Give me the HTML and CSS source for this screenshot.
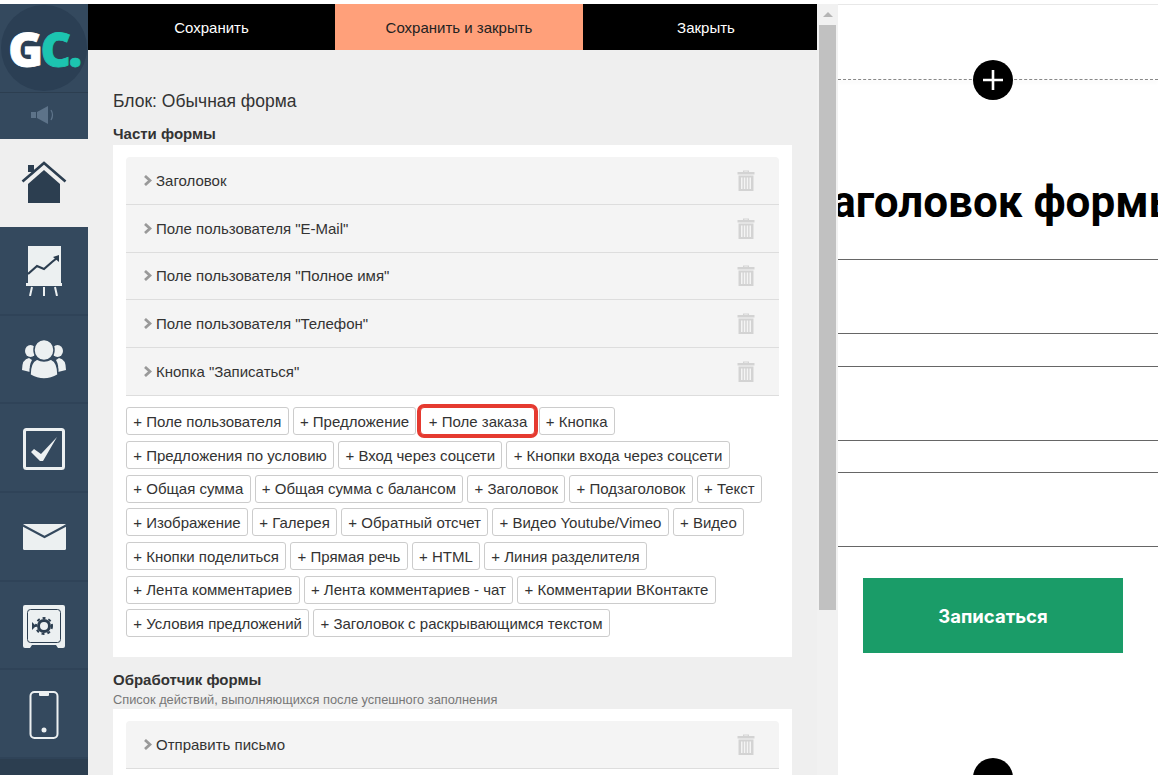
FILE: index.html
```html
<!DOCTYPE html>
<html lang="ru">
<head>
<meta charset="utf-8">
<title>Блок: Обычная форма</title>
<link rel="stylesheet" href="styles.css">
</head>
<body>
<div class="app">
  <nav class="side">
    <div class="logo-wrap"><div class="logo"><span class="g">G</span><span class="c">C.</span></div></div>
    <div class="sound">
      <svg width="28" height="20" viewBox="0 0 28 20"><rect x="1" y="7" width="5" height="6" fill="#5d7389"/><path d="M7 7l11-6v18L7 13z" fill="#5d7389"/><path d="M21 5q3 5 0 10" stroke="#5d7389" stroke-width="1.300" fill="none"/></svg>
    </div>
    <div class="nav-item active">
      <svg width="46" height="44" viewBox="0 0 46 44"><path d="M7 11V4h6v7z" fill="#2c3e50"/><path d="M1.500 20.500L23 2l21.500 18.500" fill="none" stroke="#2c3e50" stroke-width="2.600"/><path d="M7 23L23 9 39 23v19H7z" fill="#2c3e50"/></svg>
    </div>
    <div class="nav-item">
      <svg width="36" height="50" viewBox="0 0 36 50"><rect x="2" y="0" width="33" height="37" fill="#ecf0f1"/><path d="M2 28l9-8 7 3 8-7 5-4" fill="none" stroke="#2c3e50" stroke-width="2.200"/><path d="M33 9v7l-6-5z" fill="#2c3e50"/><rect x="0" y="37" width="36" height="3" fill="#ecf0f1"/><path d="M6 41l-2 9M18 41v9M29 41l2 9" stroke="#ecf0f1" stroke-width="2"/></svg>
    </div>
    <div class="nav-item">
      <svg width="44" height="40" viewBox="0 0 44 40"><ellipse cx="8.500" cy="11" rx="5.500" ry="6" fill="#ecf0f1"/><ellipse cx="35.500" cy="11" rx="5.500" ry="6" fill="#ecf0f1"/><path d="M0 30q0-11 7-12l3 2q-3 5-2 12z" fill="#ecf0f1"/><path d="M44 30q0-11-7-12l-3 2q3 5 2 12z" fill="#ecf0f1"/><ellipse cx="22" cy="10" rx="10" ry="10.500" fill="#ecf0f1" stroke="#34495e" stroke-width="1.500"/><path d="M8 35q0-13 7-16 7 4 14 0 7 3 7 16-14 8-28 0z" fill="#ecf0f1" stroke="#34495e" stroke-width="1.500"/></svg>
    </div>
    <div class="nav-item">
      <svg width="42" height="42" viewBox="0 0 42 42"><rect x="1.500" y="1.500" width="39" height="39" rx="2" fill="none" stroke="#ecf0f1" stroke-width="3"/><path d="M8 24l3-3 7 5 16-17-14 24h-3z" fill="#ecf0f1"/></svg>
    </div>
    <div class="nav-item">
      <svg width="43" height="26" viewBox="0 0 43 26"><rect x="0" y="0" width="43" height="26" rx="1.500" fill="#ecf0f1"/><path d="M0 1.500L21.500 13 43 1.500" fill="none" stroke="#34495e" stroke-width="2"/></svg>
    </div>
    <div class="nav-item">
      <svg width="42" height="43" viewBox="0 0 42 43"><path d="M2 0h38a2 2 0 0 1 2 2v39a2 2 0 0 1-2 2h-5l-2-3H9l-2 3H2a2 2 0 0 1-2-2V2a2 2 0 0 1 2-2z" fill="#ecf0f1"/><rect x="4.500" y="4.500" width="33" height="33" rx="3" fill="none" stroke="#2c3e50" stroke-width="1"/><circle cx="21" cy="21" r="5.500" fill="none" stroke="#2c3e50" stroke-width="3"/><circle cx="21" cy="21" r="8" fill="none" stroke="#2c3e50" stroke-width="2" stroke-dasharray="3 3"/><path d="M9 17l4 4-4 4z" fill="#2c3e50"/></svg>
    </div>
    <div class="nav-item">
      <svg width="30" height="48" viewBox="0 0 30 48"><rect x="1.500" y="1" width="27" height="46" rx="4" fill="none" stroke="#ecf0f1" stroke-width="2"/><path d="M10 1h10v3a1 1 0 0 1-1 1h-8a1 1 0 0 1-1-1z" fill="#ecf0f1"/><circle cx="15" cy="39" r="2.500" fill="#ecf0f1"/></svg>
    </div>
    <div class="side-foot"></div>
  </nav>

  <section class="panel">
    <div class="panel-main">
      <div class="topbar">
        <div class="tb-btn">Сохранить</div>
        <div class="tb-btn primary">Сохранить и закрыть</div>
        <div class="tb-btn">Закрыть</div>
      </div>
      <div class="content">
        <h1 class="block-title">Блок: Обычная форма</h1>
        <h2 class="sec-title">Части формы</h2>
        <div class="card">
          <div class="row"><span class="row-label"><svg class="chev" width="8" height="11" viewBox="0 0 8 11"><path d="M1 1l5 4.500L1 10" fill="none" stroke="#999" stroke-width="2.800"/></svg>Заголовок</span><svg class="trash" width="18" height="21" viewBox="0 0 18 21"><use href="#trash-shape"/></svg></div>
          <div class="row"><span class="row-label"><svg class="chev" width="8" height="11" viewBox="0 0 8 11"><path d="M1 1l5 4.500L1 10" fill="none" stroke="#999" stroke-width="2.800"/></svg>Поле пользователя "E-Mail"</span><svg class="trash" width="18" height="21" viewBox="0 0 18 21"><use href="#trash-shape"/></svg></div>
          <div class="row"><span class="row-label"><svg class="chev" width="8" height="11" viewBox="0 0 8 11"><path d="M1 1l5 4.500L1 10" fill="none" stroke="#999" stroke-width="2.800"/></svg>Поле пользователя "Полное имя"</span><svg class="trash" width="18" height="21" viewBox="0 0 18 21"><use href="#trash-shape"/></svg></div>
          <div class="row"><span class="row-label"><svg class="chev" width="8" height="11" viewBox="0 0 8 11"><path d="M1 1l5 4.500L1 10" fill="none" stroke="#999" stroke-width="2.800"/></svg>Поле пользователя "Телефон"</span><svg class="trash" width="18" height="21" viewBox="0 0 18 21"><use href="#trash-shape"/></svg></div>
          <div class="row"><span class="row-label"><svg class="chev" width="8" height="11" viewBox="0 0 8 11"><path d="M1 1l5 4.500L1 10" fill="none" stroke="#999" stroke-width="2.800"/></svg>Кнопка "Записаться"</span><svg class="trash" width="18" height="21" viewBox="0 0 18 21"><use href="#trash-shape"/></svg></div>
          <div class="chips">
            <span class="chip">+ Поле пользователя</span>
            <span class="chip">+ Предложение</span>
            <span class="chip marked">+ Поле заказа</span>
            <span class="chip">+ Кнопка</span>
            <span class="chip">+ Предложения по условию</span>
            <span class="chip">+ Вход через соцсети</span>
            <span class="chip">+ Кнопки входа через соцсети</span>
            <span class="chip">+ Общая сумма</span>
            <span class="chip">+ Общая сумма с балансом</span>
            <span class="chip">+ Заголовок</span>
            <span class="chip">+ Подзаголовок</span>
            <span class="chip">+ Текст</span>
            <span class="chip">+ Изображение</span>
            <span class="chip">+ Галерея</span>
            <span class="chip">+ Обратный отсчет</span>
            <span class="chip">+ Видео Youtube/Vimeo</span>
            <span class="chip">+ Видео</span>
            <span class="chip">+ Кнопки поделиться</span>
            <span class="chip">+ Прямая речь</span>
            <span class="chip">+ HTML</span>
            <span class="chip">+ Линия разделителя</span>
            <span class="chip">+ Лента комментариев</span>
            <span class="chip">+ Лента комментариев - чат</span>
            <span class="chip">+ Комментарии ВКонтакте</span>
            <span class="chip">+ Условия предложений</span>
            <span class="chip">+ Заголовок с раскрывающимся текстом</span>
          </div>
        </div>
        <h2 class="sec-title second">Обработчик формы</h2>
        <p class="sec-sub">Список действий, выполняющихся после успешного заполнения</p>
        <div class="card">
          <div class="row"><span class="row-label"><svg class="chev" width="8" height="11" viewBox="0 0 8 11"><path d="M1 1l5 4.500L1 10" fill="none" stroke="#999" stroke-width="2.800"/></svg>Отправить письмо</span><svg class="trash" width="18" height="21" viewBox="0 0 18 21"><use href="#trash-shape"/></svg></div>
        </div>
      </div>
    </div>
    <div class="scrollbar">
      <div class="arrow"></div>
      <div class="thumb"></div>
    </div>
  </section>

  <main class="preview">
    <div class="divider"><span class="add"><svg width="20" height="20" viewBox="0 0 20 20"><path d="M10 0v20M0 10h20" stroke="#fff" stroke-width="2.600"/></svg></span></div>
    <div class="form-head">Заголовок формы</div>
    <div class="field"></div>
    <div class="field gap-a"></div>
    <div class="field gap-b"></div>
    <div class="field gap-a"></div>
    <div class="field gap-c"></div>
    <div class="field gap-a"></div>
    <div class="submit">Записаться</div>
    <div class="add-bottom"><span class="add"></span></div>
  </main>
</div>
<svg width="0" height="0" class="defs"><defs><g id="trash-shape" fill="#d3d3d3"><path d="M6 2V0.500h6V2h5.500v2.500H.5V2zM7.200 1.400V2h3.600v-.6z" fill-rule="evenodd"/><path fill-rule="evenodd" d="M1.500 5.500h15V21h-15zM4 7.500v11.500h1.500V7.500zM6.800 7.500v11.500h1.500V7.500zM9.700 7.500v11.500h1.500V7.500zM12.500 7.500v11.500h1.500V7.500z"/></g></defs></svg>
</body>
</html>
```

FILE: styles.css
```css
* { box-sizing: border-box; }
html, body { margin: 0; height: 100%; overflow: hidden; background: #fff; }
body { font-family: "Liberation Sans", Arial, sans-serif; font-size: 15px; color: #333; }
.defs { display: block; height: 0; }

.app { display: flex; height: 775px; padding-top: 4px; overflow: hidden; }

/* sidebar */
.side { width: 88px; flex: none; background: #34495e; display: flex; flex-direction: column; }
.logo-wrap { height: 89px; flex: none; border-bottom: 1px solid #2c3e50; display: flex; justify-content: center; align-items: center; }
.logo { width: 86px; height: 86px; border-radius: 50%; background: #2b3f54; display: flex; justify-content: center; align-items: center; font-family: "Open Sans", sans-serif; font-weight: 800; font-size: 47px; line-height: 1; letter-spacing: -2.500px; padding-top: 2px; -webkit-text-stroke: .8px currentColor; }
.g { color: #fff; }
.c { color: #1cc4b0; }
.sound { height: 46px; flex: none; padding-bottom: 3px; display: flex; justify-content: center; align-items: center; }
.nav-item { height: 88.700px; flex: none; padding-top: 2px; display: flex; justify-content: center; align-items: center; border-bottom: 2px solid #2f4358; }
.nav-item.active { height: 88px; padding-top: 0; background: #efefef; border-bottom: 0; }
.side-foot { flex: 1; background: #2c3e50; }

/* settings panel */
.panel { width: 750px; flex: none; display: flex; background: #efefef; overflow: hidden; }
.panel-main { width: 729px; flex: none; display: flex; flex-direction: column; }
.topbar { height: 46px; flex: none; display: flex; background: #000; }
.tb-btn { width: 247px; flex: none; display: flex; justify-content: center; align-items: center; color: #fff; font-size: 15px; }
.tb-btn:last-child { width: 234px; padding-left: 12px; }
.tb-btn.primary { width: 248px; background: #ffa07a; color: #222; }
.content { padding: 41px 25px 0; }
.block-title { margin: 0 0 13px; font-size: 17.500px; font-weight: 400; line-height: 20px; color: #333; }
.sec-title { margin: 0 0 1px; font-size: 15px; font-weight: 700; line-height: 20px; color: #333; }
.sec-title.second { margin: 13px 0 1px; }
.sec-sub { margin: 0; font-size: 12.800px; line-height: 18px; color: #777; }
.card { background: #fff; padding: 12px 13px 19.500px; }
.row { height: 47.800px; display: flex; justify-content: space-between; align-items: center; padding: 0 24px 0 18px; background: #f4f4f4; border-bottom: 1px solid #ddd; }
.row:first-child { border-radius: 4px 4px 0 0; }
.row-label { display: flex; align-items: center; gap: 4px; color: #333; }
.chips { display: flex; flex-wrap: wrap; gap: 5.670px 4px; margin-top: 11.500px; }
.chip { height: 28px; padding: 0 6.300px; display: flex; align-items: center; border: 1px solid #ccc; border-radius: 3px; background: #fff; color: #333; white-space: nowrap; }
.chip.marked { padding: 0 6.300px 0 7.300px; box-shadow: 0 0 0 3px #e53a30; border-color: #e53a30; border-radius: 4px; position: relative; }

/* fake scrollbar */
.scrollbar { width: 21px; flex: none; padding: 0 2px; display: flex; flex-direction: column; align-items: stretch; background: #f1f1f1; }
.arrow { height: 21px; flex: none; position: relative; }
.arrow::before { content: ""; position: absolute; left: 4px; top: 8px; border: 5px solid transparent; border-top: 0; border-bottom: 5px solid #b5b5b5; }
.thumb { height: 585px; flex: none; background: #c1c1c1; }

/* preview */
.preview { flex: 1; min-width: 0; overflow: hidden; background: #fff; border-top: 1px solid #e8e8e8; padding-right: 10px; display: flex; flex-direction: column; align-items: stretch; }
.divider { height: 1px; margin-top: 74px; border-top: 1px dashed #888; display: flex; justify-content: center; align-items: center; margin-right: -10px; padding-right: 10px; box-shadow: 0 2px 4px rgba(0,0,0,.08); }
.add { width: 40px; height: 40px; flex: none; border-radius: 50%; background: #000; display: flex; justify-content: center; align-items: center; }
.form-head { margin-top: 97px; height: 50px; padding-left: 4px; display: flex; justify-content: center; align-items: center; white-space: nowrap; font-family: Roboto, sans-serif; font-weight: 700; font-size: 44px; color: #000; }
.field { height: 1px; background: #666; margin-right: -10px; margin-top: 32px; flex: none; }
.gap-a { margin-top: 73px; }
.gap-b { margin-top: 32px; }
.gap-c { margin-top: 31px; }
.submit { width: 260px; height: 75px; flex: none; margin: 31px auto 0; background: #1a9c68; color: #fff; display: flex; justify-content: center; align-items: center; font-family: Inter, Roboto, sans-serif; font-weight: 700; font-size: 18.500px; }
.add-bottom { display: flex; justify-content: center; margin-top: 105px; }
```
